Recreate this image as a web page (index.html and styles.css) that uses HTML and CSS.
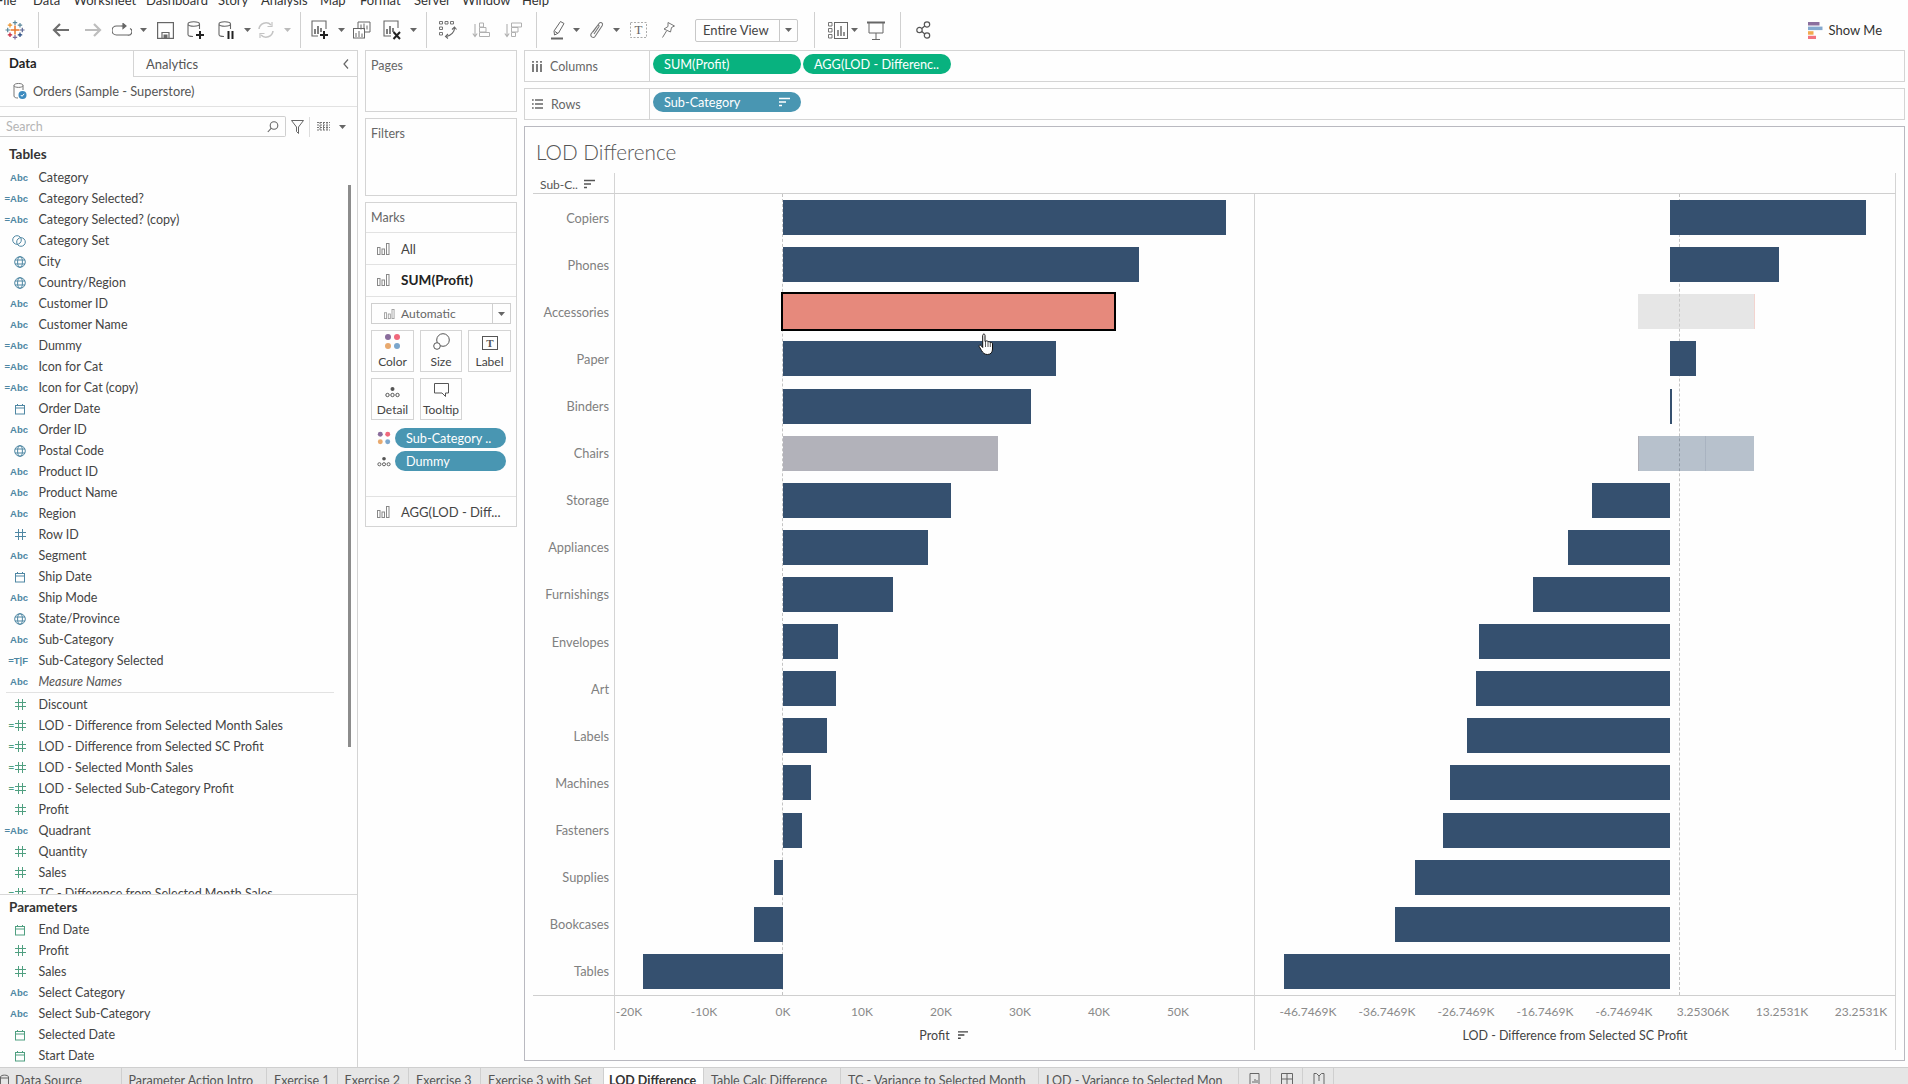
FILE: index.html
```html
<!DOCTYPE html>
<html lang="en">
<head>
<meta charset="utf-8">
<title>Tableau - LOD Difference</title>
<link rel="stylesheet" href="styles.css">
</head>
<body>
<svg class="defs" aria-hidden="true">
  <symbol id="hash" viewBox="0 0 11 11"><path d="M3.5 0V11M7.5 0V11M0 3.5H11M0 7.5H11" fill="none" stroke="currentColor"/></symbol>
  <symbol id="globe" viewBox="0 0 12 12"><g fill="none" stroke="currentColor"><circle cx="6" cy="6" r="5.3"/><ellipse cx="6" cy="6" rx="2.4" ry="5.3"/><path d="M1 4H11M1 8H11"/></g></symbol>
  <symbol id="cal" viewBox="0 0 12 12"><g fill="none" stroke="currentColor"><rect x="1.5" y="2.5" width="9" height="8.5"/><path d="M1.5 5H10.500M3.500 1V3M8.500 1V3"/></g></symbol>
  <symbol id="setc" viewBox="0 0 14 12"><g fill="none" stroke="currentColor"><circle cx="5" cy="5" r="4.300"/><circle cx="9" cy="7" r="4.300"/></g></symbol>
  <symbol id="mbars" viewBox="0 0 13 12"><g fill="none" stroke="currentColor"><rect x=".5" y="4.500" width="2.500" height="7"/><rect x="5" y="6" width="2.500" height="5.500"/><rect x="9.500" y=".5" width="2.500" height="11"/></g></symbol>
  <symbol id="sorti" viewBox="0 0 11 11"><path d="M0 1.500H11M0 5H7M0 8.500H3" fill="none" stroke="currentColor" stroke-width="1.600"/></symbol>
  <symbol id="dots" viewBox="0 0 17 17"><circle cx="4" cy="4" r="3" fill="#8a6d9c"/><circle cx="13" cy="4" r="3" fill="#f0687c"/><circle cx="4" cy="13" r="3" fill="#e8a96e"/><circle cx="13" cy="13" r="3" fill="#7ba6cc"/></symbol>
  <symbol id="detail" viewBox="0 0 15 12"><circle cx="7.500" cy="3" r="2" fill="#555"/><g fill="none" stroke="#555"><circle cx="2.500" cy="9" r="1.700"/><circle cx="7.500" cy="9" r="1.700"/><circle cx="12.500" cy="9" r="1.700"/></g></symbol>
  <symbol id="caret" viewBox="0 0 7 4"><path d="M0 0H7L3.500 4Z" fill="currentColor"/></symbol>
</svg>

<nav class="menu"><span>File</span><span>Data</span><span>Worksheet</span><span>Dashboard</span><span>Story</span><span>Analysis</span><span>Map</span><span>Format</span><span>Server</span><span>Window</span><span>Help</span></nav>

<header class="toolbar">
  <span class="ti"><svg width="20" height="20" viewBox="0 0 20 20" fill="none"><path d="M10 5.500V14.500M5.500 10H14.500" stroke="#e8762d" stroke-width="1.500"/><path d="M10 .5V5M7.800 2.700H12.200" stroke="#5b879b" stroke-width="1.200"/><path d="M10 15V19.500M7.800 17.300H12.200" stroke="#7c6a9c" stroke-width="1.200"/><path d="M2.700 7.800V12.200M.5 10H5" stroke="#59879b" stroke-width="1.200"/><path d="M17.300 7.800V12.200M15 10H19.500" stroke="#5c6692" stroke-width="1.200"/><path d="M5 3V7.500M2.800 5.200H7.200" stroke="#eb9129" stroke-width="1.200"/><path d="M15 3V7.500M12.800 5.200H17.200" stroke="#5b879b" stroke-width="1.200"/><path d="M5 12.500V17M2.800 14.800H7.200" stroke="#c72037" stroke-width="1.200"/><path d="M15 12.500V17M12.800 14.800H17.200" stroke="#1f447e" stroke-width="1.200"/></svg></span>
  <span class="tsep"></span>
  <span class="ti"><svg width="18" height="16" viewBox="0 0 18 16" fill="none" stroke="#6e6e6e" stroke-width="2.200"><path d="M17 8H2M8 2L2 8L8 14"/></svg></span>
  <span class="ti"><svg width="18" height="16" viewBox="0 0 18 16" fill="none" stroke="#bdbdbd" stroke-width="2.200"><path d="M1 8H16M10 2L16 8L10 14"/></svg></span>
  <span class="ti"><svg width="20" height="14" viewBox="0 0 20 14" fill="none" stroke="#666" stroke-width="1.200"><path d="M9 3H4.500A3.500 3.500 0 0 0 4.500 12H15.500A3.500 3.500 0 0 0 18 5.500"/><path d="M11 .5L14 3L11 5.500Z" fill="#666"/><path d="M9 3H12"/></svg></span>
  <span class="tc"><svg class="car" width="7" height="4"><use href="#caret"/></svg></span>
  <span class="ti"><svg width="17" height="17" viewBox="0 0 17 17" fill="none" stroke="#666" stroke-width="1.200"><rect x=".6" y=".6" width="15.800" height="15.800"/><path d="M5 16V10.500H12V16"/><rect x="6.500" y="12.500" width="4" height="3.500" fill="#666" stroke="none"/></svg></span>
  <span class="ti"><svg width="18" height="20" viewBox="0 0 18 20" fill="none"><path d="M1 4V14.500C1 16 3 16.500 6 16.500M12.500 4V9M1 4C1 1 12.500 1 12.500 4C12.500 7 1 7 1 4Z" stroke="#666" stroke-width="1.100"/><path d="M13 11V19M9 15H17" stroke="#222" stroke-width="2"/></svg></span>
  <span class="ti"><svg width="18" height="20" viewBox="0 0 18 20" fill="none"><path d="M1 4V14.500C1 16 3 16.500 6 16.500M12.500 4V9M1 4C1 1 12.500 1 12.500 4C12.500 7 1 7 1 4Z" stroke="#666" stroke-width="1.100"/><path d="M10.500 11V19M14.500 11V19" stroke="#222" stroke-width="2"/></svg></span>
  <span class="tc"><svg class="car" width="7" height="4"><use href="#caret"/></svg></span>
  <span class="ti"><svg width="18" height="18" viewBox="0 0 18 18" fill="none" stroke="#c4c4c4" stroke-width="1.600"><path d="M2 8A7 7 0 0 1 14 4M16 10A7 7 0 0 1 4 14"/><path d="M15 1V5.500H10.500M3 17V12.500H7.500" stroke-width="1.200"/></svg></span>
  <span class="tc lite"><svg class="car" width="7" height="4"><use href="#caret"/></svg></span>
  <span class="tsep"></span>
  <span class="ti"><svg width="18" height="20" viewBox="0 0 18 20" fill="none"><path d="M15 9V1H1V16H7" stroke="#666" stroke-width="1.100"/><path d="M4 9V14M7 6V14M10 8V12" stroke="#555" stroke-width="1.500"/><path d="M13 11V19M9 15H17" stroke="#222" stroke-width="2"/></svg></span>
  <span class="tc"><svg class="car" width="7" height="4"><use href="#caret"/></svg></span>
  <span class="ti"><svg width="18" height="18" viewBox="0 0 18 18" fill="none" stroke="#666" stroke-width="1"><path d="M5 7V1H17V11H12"/><rect x=".5" y="7.500" width="11" height="9.500" fill="#fff"/><path d="M8 3.500V8.500M11 2.500V8.500M14 4.500V8.500M3 12V16M6 10V16M9 12.500V16"/></svg></span>
  <span class="ti"><svg width="20" height="20" viewBox="0 0 20 20" fill="none"><path d="M15 8V1H1V16H8" stroke="#666" stroke-width="1.100"/><path d="M4 9V14M7 6V14M10 8V12" stroke="#555" stroke-width="1.500"/><path d="M10.500 12L17 19M17 12L10.500 19" stroke="#222" stroke-width="2"/></svg></span>
  <span class="tc"><svg class="car" width="7" height="4"><use href="#caret"/></svg></span>
  <span class="tsep"></span>
  <span class="ti"><svg width="18" height="18" viewBox="0 0 18 18" fill="none" stroke="#666"><path d="M.5 .5H3.500V3H.5ZM6 .5H9V3H6ZM11.500 .5H14.500V3H11.500ZM.5 6H3.500V8.500H.5ZM.5 11.500H3.500V14H.5Z" stroke-width=".9"/><path d="M15.500 7C15.500 11 12 14.500 7.500 15.500" stroke-width="1.200"/><path d="M13 8.500L15.500 6L17.500 8.500M9 13L6.500 15.500L9 17.500" stroke-width="1.100"/></svg></span>
  <span class="ti"><svg width="18" height="16" viewBox="0 0 18 16" fill="none" stroke="#b0b0b0"><path d="M3 2V14M.8 11.500L3 14.500L5.200 11.500" stroke-width="1.100"/><path d="M7.500 1H11.500V5H7.500ZM7.500 5.500H14V10H7.500ZM7.500 10.500H17.500V14.500H7.500Z"/></svg></span>
  <span class="ti"><svg width="18" height="16" viewBox="0 0 18 16" fill="none" stroke="#b0b0b0"><path d="M3 2V14M.8 11.500L3 14.500L5.200 11.500" stroke-width="1.100"/><path d="M7.500 1H17.500V5H7.500ZM7.500 5.500H14V10H7.500ZM7.500 10.500H11.500V14.500H7.500Z"/></svg></span>
  <span class="tsep"></span>
  <span class="ti"><svg width="16" height="20" viewBox="0 0 16 20" fill="none" stroke="#666"><path d="M4 11L10.500 1.500L14 3.500L8.500 13L4.500 15Z"/><path d="M5 11.500L8 13.500"/><path d="M1 18.500H13" stroke-width="2"/></svg></span>
  <span class="tc"><svg class="car" width="7" height="4"><use href="#caret"/></svg></span>
  <span class="ti"><svg width="15" height="18" viewBox="0 0 15 18" fill="none" stroke="#777" stroke-width="1.100"><path d="M4 11L10 2.500C11.500 .5 14.500 2 13.300 4.500L6 15.500C4.500 17.500 1 16 2 13L8.500 4.500C9 3.700 10.500 4.500 10 5.500L5 13"/></svg></span>
  <span class="tc"><svg class="car" width="7" height="4"><use href="#caret"/></svg></span>
  <span class="ti"><svg width="17" height="16" viewBox="0 0 17 16"><rect x=".5" y=".5" width="16" height="15" fill="none" stroke="#aaa" stroke-dasharray="2 1.500"/><text x="8.500" y="12" text-anchor="middle" class="svgt" fill="#666">T</text></svg></span>
  <span class="ti"><svg width="15" height="18" viewBox="0 0 15 18" fill="none" stroke="#777"><path d="M7 1.500L13.500 5L10.500 6.500L9.500 11L3 8L7 5.500ZM5.500 10L1.500 16.500"/></svg></span>
  <span class="fit"><span class="fit-t">Entire View</span><span class="fit-c"><svg class="car" width="7" height="4"><use href="#caret"/></svg></span></span>
  <span class="tsep"></span>
  <span class="ti"><svg width="20" height="17" viewBox="0 0 20 17" fill="none" stroke="#666"><path d="M.5 .5H4V4H.5ZM.5 6.500H4V10H.5ZM.5 12.500H4V16H.5Z" stroke-width=".9"/><rect x="6.500" y=".5" width="13" height="16"/><path d="M10 8V14M13 4V14M16 10V14" stroke-width="1.400"/></svg></span>
  <span class="tc"><svg class="car" width="7" height="4"><use href="#caret"/></svg></span>
  <span class="ti"><svg width="18" height="19" viewBox="0 0 18 19" fill="none" stroke="#666"><path d="M0 1.500H18" stroke-width="2"/><path d="M2 2V12H16V2M9 12V18M5 18.500H13"/></svg></span>
  <span class="tsep"></span>
  <span class="ti"><svg width="15" height="18" viewBox="0 0 15 18" fill="none" stroke="#555" stroke-width="1.200"><circle cx="3.500" cy="9" r="2.700"/><circle cx="11" cy="3.500" r="2.700"/><circle cx="11" cy="14.500" r="2.700"/><path d="M5.800 7.500L8.800 5M5.800 10.500L8.800 13"/></svg></span>
  <span></span>
  <span class="showme"><svg width="15" height="17" viewBox="0 0 15 17"><rect y="0" width="11.500" height="3.500" fill="#8b6f9e"/><rect y="4.600" width="14.500" height="3.500" fill="#84a9cf"/><rect y="9.200" width="5.500" height="3.500" fill="#f2a94d"/><rect y="13.800" width="8" height="3.200" fill="#f2737f"/></svg>Show Me</span>
</header>

<main class="work">
  <aside class="side">
    <div class="stabs">
      <span class="stab-on">Data</span>
      <span class="stab-off">Analytics<svg width="6" height="10" viewBox="0 0 6 10" fill="none" stroke="#666" stroke-width="1.200"><path d="M5 .5L1 5L5 9.500"/></svg></span>
    </div>
    <div class="source"><svg width="14" height="18" viewBox="0 0 14 18"><g fill="none" stroke="#777"><path d="M1 3.500V14C1 15.500 3 16 5 16M10 3.500V8M1 3.500C1 .8 10 .8 10 3.500C10 6 1 6 1 3.500Z"/></g><circle cx="9.500" cy="13" r="4" fill="#3d8bbf"/><path d="M7.800 13L9 14.300L11.200 11.800" fill="none" stroke="#fff"/></svg>Orders (Sample - Superstore)</div>
    <div class="searchrow">
      <div class="search"><span>Search</span><svg width="12" height="12" viewBox="0 0 12 12" fill="none" stroke="#666" stroke-width="1.100"><circle cx="7" cy="4.500" r="3.800"/><path d="M4.300 7.200L.8 11"/></svg></div>
      <svg class="sfilter" width="13" height="14" viewBox="0 0 13 14" fill="none" stroke="#666"><path d="M.5 .5H12.500L7.500 7V13.500L5.500 11.500V7Z"/></svg>
      <span class="ssep"></span>
      <svg width="13" height="11" viewBox="0 0 13 11" fill="none" stroke="#777"><path d="M0 1.500H13M0 4H13M0 6.500H13M0 9H13M3 1V10M6.500 1V10M10 1V10" stroke-dasharray="2 1"/></svg>
      <svg class="car scar" width="7" height="4"><use href="#caret"/></svg>
    </div>
    <h2 class="shead">Tables</h2>
    <div class="fields">
      <ul class="flist">
        <li><span class="ty abc">Abc</span>Category</li>
        <li><span class="ty abc">=Abc</span>Category Selected?</li>
        <li><span class="ty abc">=Abc</span>Category Selected? (copy)</li>
        <li><span class="ty dim"><svg width="14" height="12"><use href="#setc"/></svg></span>Category Set</li>
        <li><span class="ty dim"><svg width="12" height="12"><use href="#globe"/></svg></span>City</li>
        <li><span class="ty dim"><svg width="12" height="12"><use href="#globe"/></svg></span>Country/Region</li>
        <li><span class="ty abc">Abc</span>Customer ID</li>
        <li><span class="ty abc">Abc</span>Customer Name</li>
        <li><span class="ty abc">=Abc</span>Dummy</li>
        <li><span class="ty abc">=Abc</span>Icon for Cat</li>
        <li><span class="ty abc">=Abc</span>Icon for Cat (copy)</li>
        <li><span class="ty dim"><svg width="12" height="12"><use href="#cal"/></svg></span>Order Date</li>
        <li><span class="ty abc">Abc</span>Order ID</li>
        <li><span class="ty dim"><svg width="12" height="12"><use href="#globe"/></svg></span>Postal Code</li>
        <li><span class="ty abc">Abc</span>Product ID</li>
        <li><span class="ty abc">Abc</span>Product Name</li>
        <li><span class="ty abc">Abc</span>Region</li>
        <li><span class="ty dim"><svg width="11" height="11"><use href="#hash"/></svg></span>Row ID</li>
        <li><span class="ty abc">Abc</span>Segment</li>
        <li><span class="ty dim"><svg width="12" height="12"><use href="#cal"/></svg></span>Ship Date</li>
        <li><span class="ty abc">Abc</span>Ship Mode</li>
        <li><span class="ty dim"><svg width="12" height="12"><use href="#globe"/></svg></span>State/Province</li>
        <li><span class="ty abc">Abc</span>Sub-Category</li>
        <li><span class="ty abc">=T|F</span>Sub-Category Selected</li>
        <li class="mnames"><span class="ty abc">Abc</span><em>Measure Names</em></li>
      </ul>
      <ul class="flist measures">
        <li><span class="ty num"><svg width="11" height="11"><use href="#hash"/></svg></span>Discount</li>
        <li><span class="ty num">=<svg width="11" height="11"><use href="#hash"/></svg></span>LOD - Difference from Selected Month Sales</li>
        <li><span class="ty num">=<svg width="11" height="11"><use href="#hash"/></svg></span>LOD - Difference from Selected SC Profit</li>
        <li><span class="ty num">=<svg width="11" height="11"><use href="#hash"/></svg></span>LOD - Selected Month Sales</li>
        <li><span class="ty num">=<svg width="11" height="11"><use href="#hash"/></svg></span>LOD - Selected Sub-Category Profit</li>
        <li><span class="ty num"><svg width="11" height="11"><use href="#hash"/></svg></span>Profit</li>
        <li><span class="ty abc">=Abc</span>Quadrant</li>
        <li><span class="ty num"><svg width="11" height="11"><use href="#hash"/></svg></span>Quantity</li>
        <li><span class="ty num"><svg width="11" height="11"><use href="#hash"/></svg></span>Sales</li>
        <li><span class="ty num">=<svg width="11" height="11"><use href="#hash"/></svg></span>TC - Difference from Selected Month Sales</li>
      </ul>
      <span class="sbar"></span>
    </div>
    <div class="params">
      <h2 class="phead">Parameters</h2>
      <ul class="flist">
        <li><span class="ty num"><svg width="12" height="12"><use href="#cal"/></svg></span>End Date</li>
        <li><span class="ty num"><svg width="11" height="11"><use href="#hash"/></svg></span>Profit</li>
        <li><span class="ty num"><svg width="11" height="11"><use href="#hash"/></svg></span>Sales</li>
        <li><span class="ty abc">Abc</span>Select Category</li>
        <li><span class="ty abc">Abc</span>Select Sub-Category</li>
        <li><span class="ty num"><svg width="12" height="12"><use href="#cal"/></svg></span>Selected Date</li>
        <li><span class="ty num"><svg width="12" height="12"><use href="#cal"/></svg></span>Start Date</li>
      </ul>
    </div>
  </aside>

  <section class="cards">
    <div class="card pages">Pages</div>
    <div class="card filters">Filters</div>
    <div class="marks">
      <div class="mtitle">Marks</div>
      <div class="mrow"><svg width="13" height="12"><use href="#mbars"/></svg>All</div>
      <div class="mrow mbold"><svg width="13" height="12"><use href="#mbars"/></svg>SUM(Profit)</div>
      <div class="mbody">
        <div class="mtype"><span class="mtype-t"><svg width="11" height="10"><use href="#mbars"/></svg>Automatic</span><span class="mtype-c"><svg class="car" width="7" height="4"><use href="#caret"/></svg></span></div>
        <div class="mbtns">
          <div class="mbtn"><svg width="17" height="17"><use href="#dots"/></svg>Color</div>
          <div class="mbtn"><svg width="17" height="17" viewBox="0 0 17 17" fill="none" stroke="#555"><circle cx="10" cy="7" r="6.300"/><circle cx="4" cy="13" r="3.300" fill="#fff"/></svg>Size</div>
          <div class="mbtn"><svg width="16" height="14" viewBox="0 0 16 14"><rect x=".5" y=".5" width="15" height="13" fill="none" stroke="#555"/><text x="8" y="11" text-anchor="middle" class="svgt2" fill="#555">T</text></svg>Label</div>
          <div class="mbtn"><svg width="15" height="12"><use href="#detail"/></svg>Detail</div>
          <div class="mbtn"><svg width="15" height="15" viewBox="0 0 15 15" fill="none" stroke="#555"><path d="M.5 .5H14.500V10H11.500V13.500L8 10H.5Z"/></svg>Tooltip</div>
        </div>
        <div class="mpill"><svg width="14" height="14"><use href="#dots"/></svg><span class="pill blue">Sub-Category ..</span></div>
        <div class="mpill"><svg width="14" height="11"><use href="#detail"/></svg><span class="pill blue">Dummy</span></div>
      </div>
      <div class="mrow mlast"><svg width="13" height="12"><use href="#mbars"/></svg>AGG(LOD - Diff...</div>
    </div>
  </section>

  <section class="viz">
    <div class="shelf"><span class="shelf-l"><svg width="10" height="11" viewBox="0 0 10 11" fill="none" stroke="#666" stroke-width="1.700"><path d="M1 3V11M5 3V11M9 3V11M1 0V1.700M5 0V1.700M9 0V1.700"/></svg>Columns</span><span class="pill green">SUM(Profit)</span><span class="pill green">AGG(LOD - Differenc..</span></div>
    <div class="shelf"><span class="shelf-l"><svg width="11" height="10" viewBox="0 0 11 10" fill="none" stroke="#666" stroke-width="1.500"><path d="M3 1H11M3 5H11M3 9H11M0 1H1.700M0 5H1.700M0 9H1.700"/></svg>Rows</span><span class="pill blue pill-s">Sub-Category<svg width="11" height="11"><use href="#sorti"/></svg></span></div>
    <div class="sheet">
      <h1 class="title">LOD Difference</h1>
      <div class="chart">
        <div class="hcell">Sub-C..<svg width="11" height="11"><use href="#sorti"/></svg></div>
        <div class="hfill"></div>
        <div class="labels">
          <div>Copiers</div><div>Phones</div><div>Accessories</div><div>Paper</div><div>Binders</div><div>Chairs</div><div>Storage</div><div>Appliances</div><div>Furnishings</div><div>Envelopes</div><div>Art</div><div>Labels</div><div>Machines</div><div>Fasteners</div><div>Supplies</div><div>Bookcases</div><div>Tables</div>
        </div>
        <div class="pane pane-l">
          <div class="row"><i class="bar" style="margin-left:168px;width:443px"></i></div>
          <div class="row"><i class="bar" style="margin-left:168px;width:356px"></i></div>
          <div class="row"><i class="bar sel" style="margin-left:168px;width:331px"></i></div>
          <div class="row"><i class="bar" style="margin-left:168px;width:273px"></i></div>
          <div class="row"><i class="bar" style="margin-left:168px;width:248px"></i></div>
          <div class="row"><i class="bar chl" style="margin-left:168px;width:215px"></i></div>
          <div class="row"><i class="bar" style="margin-left:168px;width:168px"></i></div>
          <div class="row"><i class="bar" style="margin-left:168px;width:145px"></i></div>
          <div class="row"><i class="bar" style="margin-left:168px;width:110px"></i></div>
          <div class="row"><i class="bar" style="margin-left:168px;width:55px"></i></div>
          <div class="row"><i class="bar" style="margin-left:168px;width:53px"></i></div>
          <div class="row"><i class="bar" style="margin-left:168px;width:44px"></i></div>
          <div class="row"><i class="bar" style="margin-left:168px;width:28px"></i></div>
          <div class="row"><i class="bar" style="margin-left:168px;width:19px"></i></div>
          <div class="row"><i class="bar" style="margin-left:159px;width:9px"></i></div>
          <div class="row"><i class="bar" style="margin-left:139px;width:29px"></i></div>
          <div class="row"><i class="bar" style="margin-left:28px;width:140px"></i></div>
          <svg class="hand" width="16" height="23" viewBox="0 0 16 23"><path d="M5 1.500C5.800 .7 7 1 7 2.500V8.500L8.200 8C9 7.600 9.800 8 10 8.800C10.800 8.300 11.800 8.600 12 9.500C13 9.100 14.500 9.500 14.500 11V16C14.500 19 13 21.500 9.500 21.500C6.500 21.500 5 20 3.500 17.500L1.200 13.500C.7 12.300 2 11.500 3 12.500L4.700 14.500V2.500Z" fill="#fff" stroke="#111"/><path d="M7.500 9V14M10 9V14M12.300 10V14" stroke="#111" stroke-width=".7"/></svg>
        </div>
        <div class="pane pane-r">
          <div class="row"><i class="bar" style="margin-left:415px;width:196px"></i></div>
          <div class="row"><i class="bar" style="margin-left:415px;width:109px"></i></div>
          <div class="row"><i class="bar accr" style="margin-left:383px;width:117px"></i></div>
          <div class="row"><i class="bar" style="margin-left:415px;width:26px"></i></div>
          <div class="row"><i class="bar" style="margin-left:415px;width:2px"></i></div>
          <div class="row"><i class="bar chr" style="margin-left:383px;width:116px"></i></div>
          <div class="row"><i class="bar" style="margin-left:337px;width:78px"></i></div>
          <div class="row"><i class="bar" style="margin-left:313px;width:102px"></i></div>
          <div class="row"><i class="bar" style="margin-left:278px;width:137px"></i></div>
          <div class="row"><i class="bar" style="margin-left:224px;width:191px"></i></div>
          <div class="row"><i class="bar" style="margin-left:221px;width:194px"></i></div>
          <div class="row"><i class="bar" style="margin-left:212px;width:203px"></i></div>
          <div class="row"><i class="bar" style="margin-left:195px;width:220px"></i></div>
          <div class="row"><i class="bar" style="margin-left:188px;width:227px"></i></div>
          <div class="row"><i class="bar" style="margin-left:160px;width:255px"></i></div>
          <div class="row"><i class="bar" style="margin-left:140px;width:275px"></i></div>
          <div class="row"><i class="bar" style="margin-left:29px;width:386px"></i></div>
        </div>
        <div class="aspace"></div>
        <div class="axis axis-l">
          <div class="ticks"><span>-20K</span><span>-10K</span><span>0K</span><span>10K</span><span>20K</span><span>30K</span><span>40K</span><span>50K</span></div>
          <div class="atitle">Profit<svg width="10" height="11"><use href="#sorti"/></svg></div>
        </div>
        <div class="axis axis-r">
          <div class="ticks"><span>-46.7469K</span><span>-36.7469K</span><span>-26.7469K</span><span>-16.7469K</span><span>-6.74694K</span><span>3.25306K</span><span>13.2531K</span><span>23.2531K</span></div>
          <div class="atitle">LOD - Difference from Selected SC Profit</div>
        </div>
      </div>
    </div>
  </section>
</main>

<footer class="tabs">
  <span class="tab"><svg width="9" height="12" viewBox="0 0 9 12" fill="none" stroke="#666"><path d="M.5 3V11.500H8.500V3C8.500 .5 .5 .5 .5 3ZM.5 4H8.500"/></svg>Data Source</span>
  <span class="tab">Parameter Action Intro</span>
  <span class="tab">Exercise 1</span>
  <span class="tab">Exercise 2</span>
  <span class="tab">Exercise 3</span>
  <span class="tab">Exercise 3 with Set</span>
  <span class="tab tab-on">LOD Difference</span>
  <span class="tab">Table Calc Difference</span>
  <span class="tab">TC - Variance to Selected Month</span>
  <span class="tab">LOD - Variance to Selected Mon</span>
  <span class="tab tab-i"><svg width="11" height="12" viewBox="0 0 11 12" fill="none" stroke="#666"><path d="M1 .5H10V11.500H1ZM4 8V10M6 6V10M8 7V10"/></svg></span>
  <span class="tab tab-i"><svg width="12" height="12" viewBox="0 0 12 12" fill="none" stroke="#666"><path d="M.5 .5H11.500V11.500H.5ZM6 .5V11.500M.5 6H11.500"/></svg></span>
  <span class="tab tab-i"><svg width="12" height="12" viewBox="0 0 12 12" fill="none" stroke="#666"><path d="M1 .5H3.500L6 3L8.500 .5H11V11.500H1ZM6 3V8"/></svg></span>
</footer>
</body>
</html>
```

FILE: styles.css
```css
* { box-sizing: border-box; }
html, body { margin: 0; padding: 0; }
body {
  width: 1908px;
  height: 1084px;
  overflow: hidden;
  background: #fefefe;
  color: #444;
  font-family: "Lato", "Liberation Sans", sans-serif;
  font-size: 12.5px;
}
ul { list-style: none; margin: 0; padding: 0; }
h1, h2 { margin: 0; }
.defs { position: absolute; width: 0; height: 0; overflow: hidden; }
svg { display: block; flex: none; }
.svgt { font: 13px "Liberation Serif", serif; }
.svgt2 { font: bold 11px "Liberation Serif", serif; }

/* menu, clipped by the window top */
.menu {
  display: grid;
  grid-template-columns: 33px 40.5px 72.5px 72px 43px 59px 40px 54px 48px 60px 60px;
  height: 12px;
  margin-top: -6px;
  line-height: 12px;
  font-size: 13px;
  color: #333;
}
.menu span:first-child { margin-left: -4px; }

/* toolbar */
.toolbar {
  display: grid;
  grid-template-columns: 29px 19px 26px 38px 20px 22px 22px 40px 22px 18px 20px 22px 4px 36px 6px 36px 26px 14px 13px 30px 36px 28px 19px 24px 12px 28px 12px 32px 28px 116px 32px 16px 16px 28px 20px 26px 1fr auto;
  align-items: center;
  height: 36px;
  margin: 6px 0 2px;
}
.ti, .tc { display: flex; justify-content: center; align-items: center; }
.tc { color: #666; }
.tc.lite { color: #bbb; }
.tsep { width: 1px; height: 36px; background: #d0d0d0; justify-self: center; }
.fit {
  display: flex;
  justify-self: end;
  width: 103px;
  height: 23px;
  border: 1px solid #c8c8c8;
  border-radius: 2px;
  line-height: 21px;
  font-size: 13px;
  color: #444;
}
.fit-t { flex: 1; padding-left: 7px; }
.fit-c { width: 18px; border-left: 1px solid #c8c8c8; display: flex; align-items: center; justify-content: center; color: #666; }
.showme { display: flex; align-items: center; gap: 6px; padding-right: 26px; font-size: 13px; color: #333; }

/* workspace */
.work {
  display: grid;
  grid-template-columns: 358px 152px 1381px;
  column-gap: 7px;
  height: 1017px;
}
.side {
  display: flex;
  flex-direction: column;
  border-top: 1px solid #d4d4d4;
  border-right: 1px solid #d4d4d4;
  height: 1017px;
}
.stabs { display: flex; height: 26px; flex: none; }
.stab-on { width: 134px; padding-left: 9px; line-height: 25px; font-weight: 700; font-size: 13px; color: #222; border-right: 1px solid #d4d4d4; }
.stab-off { flex: 1; display: flex; align-items: center; justify-content: space-between; padding: 0 8px 0 12px; font-size: 13px; color: #555; border-bottom: 1px solid #d4d4d4; }
.source { display: flex; align-items: center; gap: 6px; height: 30px; flex: none; padding: 0 0 2px 13px; color: #555; border-bottom: 1px solid #e2e2e2; font-size: 12.8px; }
.searchrow { display: flex; align-items: center; height: 21px; margin-top: 9px; flex: none; }
.search { display: flex; align-items: center; justify-content: space-between; width: 286px; height: 21px; padding: 0 6px; border: 1px solid #cfcfcf; border-left: none; border-radius: 0 2px 2px 0; color: #b5b5b5; }
.sfilter { margin-left: 5px; }
.ssep { width: 1px; height: 20px; background: #ddd; margin: 0 7px 0 5px; }
.scar { color: #666; margin-left: 9px; }
.shead { height: 30px; flex: none; padding: 8px 0 0 9px; font-size: 13.5px; line-height: 18px; font-weight: 700; color: #333; }
.fields { position: relative; height: 727px; flex: none; overflow: hidden; }
.flist li { display: flex; align-items: center; height: 21px; color: #444; white-space: nowrap; }
.ty { display: flex; justify-content: flex-end; align-items: center; flex: none; width: 28px; margin-right: 10.5px; font: 700 9.5px "Liberation Sans", sans-serif; }
.ty.abc { color: #4f87a3; }
.ty.dim { color: #4f87a3; padding-right: 2px; }
.ty.num { color: #4f9f80; padding-right: 2px; gap: 1px; }
.mnames em { font-style: italic; color: #555; }
.measures { margin-top: 2px; position: relative; }
.measures::before { content: ""; position: absolute; left: 6px; top: -2px; width: 328px; height: 1px; background: #e2e2e2; }
.sbar { position: absolute; left: 348px; top: 18px; width: 3px; height: 562px; background: #8c8c8c; }
.params { flex: none; border-top: 1px solid #d8d8d8; }
.phead { height: 24px; padding: 3px 0 0 9px; font-size: 13.5px; line-height: 18px; font-weight: 700; color: #333; }

/* cards */
.cards { display: flex; flex-direction: column; gap: 6px; }
.card { border: 1px solid #d4d4d4; padding: 7px 5px; color: #666; }
.pages { height: 62px; }
.filters { height: 78px; }
.marks { height: 325px; border: 1px solid #d4d4d4; }
.mtitle { height: 30px; line-height: 29px; padding-left: 5px; color: #666; border-bottom: 1px solid #e2e2e2; }
.mrow { display: flex; align-items: center; height: 32px; padding-left: 11px; gap: 11px; border-bottom: 1px solid #e2e2e2; color: #444; font-size: 13px; }
.mrow svg { color: #888; }
.mbold { font-weight: 700; font-size: 13.6px; color: #222; height: 32px; padding-bottom: 2px; }
.mlast { border-bottom: none; border-top: 1px solid #e2e2e2; height: 31px; }
.mbody { height: 199px; padding: 6px 5px 0; }
.mtype { display: flex; height: 21px; border: 1px solid #cfcfcf; font-size: 12px; color: #666; }
.mtype-t { flex: 1; display: flex; align-items: center; gap: 6px; padding-left: 12px; }
.mtype-t svg { color: #999; }
.mtype-c { width: 18px; border-left: 1px solid #cfcfcf; display: flex; align-items: center; justify-content: center; color: #666; }
.mbtns { display: grid; grid-template-columns: 43px 42px 43px; column-gap: 6px; row-gap: 6px; margin-top: 6px; }
.mbtn { display: flex; flex-direction: column; align-items: center; justify-content: flex-end; gap: 4px; height: 42px; padding-bottom: 2px; border: 1px solid #d4d4d4; font-size: 12px; color: #444; }
.mpill { display: flex; align-items: center; height: 20px; margin: 3px 0 0 6px; gap: 4px; }
.mbtns + .mpill { margin-top: 8px; }
.mpill .pill { width: 111px; }
.pill { display: flex; align-items: center; justify-content: space-between; height: 20px; padding: 0 11px; border-radius: 10px; color: #fff; font-size: 12.7px; white-space: nowrap; }
.blue { background: #4996b2; }
.green { background: #08b27f; }
.pill-s { width: 148px; }
.pill-s svg { color: #fff; }

/* viz */
.viz { display: flex; flex-direction: column; gap: 6px; }
.shelf { display: flex; align-items: center; height: 32px; border: 1px solid #d4d4d4; gap: 2px; }
.shelf .pill { margin-top: -4px; }
.shelf .green { width: 148px; }
.shelf-l { display: flex; align-items: center; gap: 8px; width: 125px; height: 100%; padding-left: 7px; margin-right: 1px; border-right: 1px solid #d4d4d4; color: #666; }
.sheet { height: 935px; border: 1px solid #b9b9c0; padding-left: 8px; }
.title { height: 46px; padding: 12px 0 0 3px; line-height: 26px; font-size: 20.7px; font-weight: 300; color: #555; }
.chart {
  display: grid;
  grid-template-columns: 82px 640px 641px;
  grid-template-rows: 21px 802px 54px;
}
.hcell { display: flex; align-items: center; gap: 6px; padding: 2px 0 0 7px; border-right: 1px solid #d4d4d4; border-bottom: 1px solid #cfcfcf; font-size: 12px; color: #555; }
.hcell svg { color: #555; }
.hfill { grid-column: 2 / 4; border-bottom: 1px solid #cfcfcf; border-right: 1px solid #d4d4d4; }
.labels { display: grid; grid-auto-rows: 1fr; border-right: 1px solid #d4d4d4; border-bottom: 1px solid #cfcfcf; }
.labels div { display: flex; align-items: center; justify-content: flex-end; padding-right: 5px; color: #808080; font-size: 12.8px; }
.pane { position: relative; display: grid; grid-auto-rows: 1fr; border-bottom: 1px solid #cfcfcf; }
.pane-l { border-right: 1px solid #d4d4d4; }
.pane-r { border-right: 1px solid #d4d4d4; }
.pane::before { content: ""; position: absolute; top: 0; bottom: 0; border-left: 1px dashed #c4c4c4; }
.pane-l::before { left: 167px; }
.pane-r::before { left: 424px; }
.row { display: flex; align-items: center; position: relative; }
.bar { display: block; height: 35px; background: #35506f; }
.sel { background: #e6897c; outline: 2px solid #000; }
.chl { background: #b2b2ba; }
.accr { background: rgba(205, 205, 205, .5); border-right: 1px solid #f3d4cf; }
.chr { background: linear-gradient(90deg, #b0b0b8 1px, transparent 1px) 0 0 no-repeat, linear-gradient(90deg, transparent 67px, rgba(160,170,185,.6) 67px, rgba(160,170,185,.6) 68px, transparent 68px), rgba(53, 80, 111, .35); }
.hand { position: absolute; left: 363px; top: 139px; }
.aspace { border-right: 1px solid #d4d4d4; }
.axis { border-right: 1px solid #d4d4d4; min-width: 0; overflow: hidden; }
.ticks { display: flex; height: 30px; align-items: center; color: #8a8a8a; font-size: 12px; }
.ticks span { flex: none; width: 79px; text-align: center; white-space: nowrap; }
.axis-l .ticks { margin-left: -29.5px; }
.axis-l .ticks span:first-child { padding-left: 8px; }
.axis-r .ticks { padding-left: 13.5px; }
.atitle { display: flex; align-items: center; justify-content: center; gap: 8px; height: 18px; color: #444; font-size: 12.5px; }
.axis-l .atitle { padding-left: 18px; }

/* tabs */
.tabs {
  display: grid;
  grid-template-columns: 121.500px 145.500px 70.500px 71.500px 72px 123px 100px 137px 198px 200px 32px 32px 31px 1fr;
  height: 17px;
  border-top: 1.5px solid #cfcfcf;
  background: #e6e6e6;
  overflow: hidden;
}
.tab { display: flex; gap: 6px; padding: 6px 0 0 7px; height: 26px; line-height: 14px; border-right: 1px solid #cfcfcf; font-size: 12.5px; color: #555; white-space: nowrap; overflow: hidden; }
.tab:first-child { padding-left: 0; }
.tab-on { background: #fefefe; font-weight: 700; color: #333; padding-left: 5px; }
.tab-i { padding: 5px 0 0 10px; }
```
